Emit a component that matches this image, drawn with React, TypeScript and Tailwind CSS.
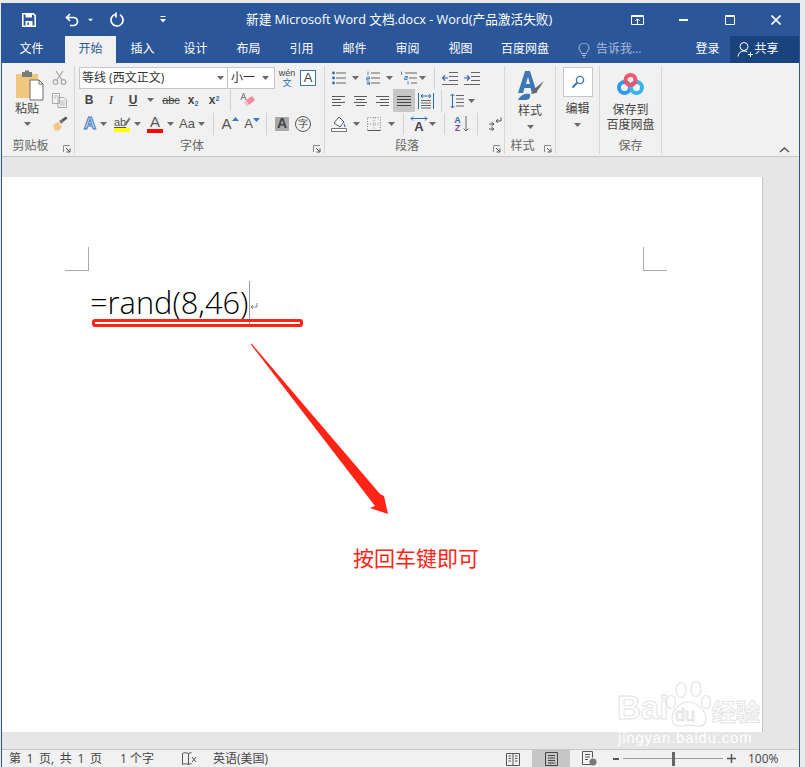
import React from "react";

const cjk = "font-['Open_Sans','Noto_Sans_CJK_SC',sans-serif]";

function Caret({ className = "", color = "#6a6a6a" }: { className?: string; color?: string }) {
  return (
    <svg width="7" height="4" viewBox="0 0 7 4" className={`shrink-0 ${className}`}>
      <path d="M0 0h7L3.5 4z" fill={color} />
    </svg>
  );
}

function Launcher() {
  return (
    <svg width="8" height="8" viewBox="0 0 8 8" className="shrink-0">
      <path d="M.5 7V.5H7" fill="none" stroke="#8a8a8a" />
      <path d="M3 3l3.5 3.5M7 3.5V7H3.5" fill="none" stroke="#555" />
    </svg>
  );
}

function Sep({ className = "" }: { className?: string }) {
  return <div className={`h-[22px] w-px shrink-0 bg-[#d2d2d2] ${className}`} />;
}

function Lines({ d, className = "", w = 15, h = 14, color = "#5a5a5a" }: { d: string; className?: string; w?: number; h?: number; color?: string }) {
  return (
    <svg width={w} height={h} viewBox={`0 0 ${w} ${h}`} className={`shrink-0 ${className}`}>
      <path d={d} fill="none" stroke={color} strokeWidth="1" />
    </svg>
  );
}

function Group({ label, width, children, launcher }: { label: string; width: string; children: React.ReactNode; launcher?: boolean }) {
  return (
    <div className={`flex h-[88px] shrink-0 flex-col border-r border-[#d6d6d6] ${width}`}>
      <div className="h-[72px] shrink-0">{children}</div>
      <div className={`relative flex h-[16px] items-center justify-center text-[12px] text-[#666] ${launcher ? "pr-[15px]" : ""}`}>
        <span>{label}</span>
        {launcher && (
          <span className="absolute right-[3px] top-[7px] flex">
            <Launcher />
          </span>
        )}
      </div>
    </div>
  );
}

function TitleBar() {
  return (
    <div className="relative flex h-[33px] items-center bg-[#2b579a] text-white">
      <svg width="14" height="14" viewBox="0 0 14 14" className="ml-[20px]">
        <path d="M.8.8h10.5L13.2 2.7V13.2H.8z" fill="none" stroke="#fff" strokeWidth="1.6" />
        <path d="M3.5 1h6.5v3.5H3.5z" fill="#fff" />
        <path d="M3.5 8h7v5h-7z" fill="#fff" />
        <path d="M5.5 9.5h1.5V12H5.5z" fill="#2b579a" />
      </svg>
      <svg width="14" height="14" viewBox="0 0 14 14" className="ml-[29px]">
        <path d="M5 1L1.5 4.5 5 8M2 4.5h6.5a4 4 0 0 1 0 8H5" fill="none" stroke="#fff" strokeWidth="1.7" />
      </svg>
      <Caret color="#fff" className="ml-[8px] scale-75" />
      <svg width="15" height="15" viewBox="0 0 15 15" className="ml-[16px]">
        <path d="M5.5 2.2A6 6 0 1 0 10 2.8M6 .5v5" fill="none" stroke="#fff" strokeWidth="1.7" />
      </svg>
      <svg width="6" height="7" viewBox="0 0 6 7" className="ml-[35px]">
        <path d="M.5 .5h5" stroke="#fff" />
        <path d="M0 3h6L3 6.5z" fill="#fff" />
      </svg>
      <span className="ml-[80px] whitespace-nowrap text-[12.66px]">新建 Microsoft Word 文档.docx - Word(产品激活失败)</span>
      <svg width="13" height="10" viewBox="0 0 13 10" className="ml-auto">
        <path d="M.5.5h12v9H.5z" fill="none" stroke="#fff" />
        <path d="M.5 1.5h12" stroke="#fff" />
        <path d="M6.5 9V4M4.3 6L6.5 3.8 8.7 6" fill="none" stroke="#fff" />
      </svg>
      <div className="ml-[35px] h-[2px] w-[9px] bg-white" />
      <svg width="10" height="10" viewBox="0 0 10 10" className="ml-[37px]">
        <path d="M.5.5h9v9h-9z" fill="none" stroke="#fff" />
        <path d="M0 1.5h10" stroke="#fff" />
      </svg>
      <svg width="10" height="10" viewBox="0 0 10 10" className="ml-[36px] mr-[18px]">
        <path d="M.5.5l9 9M9.5.5l-9 9" stroke="#fff" strokeWidth="1.6" />
      </svg>
    </div>
  );
}

function TabBar() {
  const tabs = ["插入", "设计", "布局", "引用", "邮件", "审阅", "视图"];
  return (
    <div className="flex h-[27px] items-stretch bg-[#2b579a] text-[12px] text-white">
      <div className="flex w-[63px] items-center justify-center pb-[1px] pr-[4px]">文件</div>
      <div className="flex w-[51px] items-center justify-center bg-[#f1f1f1] pb-[1px] text-[#2b579a]">开始</div>
      {tabs.map((t) => (
        <div key={t} className="flex w-[53px] shrink-0 items-center justify-center pb-[1px]">
          {t}
        </div>
      ))}
      <div className="ml-[14px] flex items-center pb-[1px]">百度网盘</div>
      <svg width="12" height="15" viewBox="0 0 12 15" className="ml-[29px] mt-[7px]">
        <path d="M3.5 10.5C3 8 1 7.5 1 5a5 5 0 0 1 10 0c0 2.5-2 3-2.5 5.5zM4 12.5h4M5 14.3h2" fill="none" stroke="#a9bcd8" />
      </svg>
      <div className="ml-[6px] flex items-center pb-[1px] text-[#a9bcd8]">告诉我...</div>
      <div className="ml-[54px] flex items-center pb-[1px]">登录</div>
      <div className="ml-[10px] flex w-[69px] items-center bg-[#19437c] pl-[7px]">
        <svg width="16" height="17" viewBox="0 0 16 17">
          <circle cx="7" cy="5.5" r="4" fill="none" stroke="#fff" />
          <path d="M1 15.5c.5-3.5 2.5-5.5 6-5.5 1.5 0 2.5.4 3.3 1M11 13.5h5M13.5 11v5" fill="none" stroke="#fff" />
        </svg>
        <span className="ml-[2px] pb-[2px]">共享</span>
      </div>
    </div>
  );
}

function Clipboard() {
  return (
    <Group label="剪贴板" width="w-[73px]" launcher>
      <div className="flex pl-[13px] pt-[4px]">
        <div className="flex w-[30px] flex-col items-start">
          <svg width="29" height="31" viewBox="0 0 29 31">
            <path d="M1 4h22v24H1z" fill="#f0c77e" />
            <path d="M7 2h10v5H7z" fill="#7a7a7a" />
            <path d="M10 .5h4V3h-4z" fill="#7a7a7a" />
            <path d="M15 10h9l4 4v16H15z" fill="#fff" stroke="#6a6a6a" />
            <path d="M24 10v4h4" fill="none" stroke="#6a6a6a" />
          </svg>
          <span className="text-[12px] leading-[16px] text-[#444]">粘贴</span>
          <Caret className="ml-[9px] mt-[5px]" />
        </div>
        <div className="ml-[7px] flex flex-col gap-[8px]">
          <svg width="15" height="15" viewBox="0 0 15 15">
            <path d="M4 1l6.5 9.5M11 1L4.5 10.5" stroke="#a9a9a9" strokeWidth="1.3" fill="none" />
            <circle cx="3.5" cy="12" r="2.3" fill="none" stroke="#a9a9a9" strokeWidth="1.3" />
            <circle cx="11.5" cy="12" r="2.3" fill="none" stroke="#a9a9a9" strokeWidth="1.3" />
          </svg>
          <svg width="15" height="15" viewBox="0 0 15 15">
            <path d="M.5.5h7v10h-7zM6 4.5h6l2.5 2.5v7.5H6z" fill="#f4f4f4" stroke="#a9a9a9" />
            <path d="M2 3h4M2 5h2M8 8h5M8 10h5M8 12h5" stroke="#bbb" />
          </svg>
          <svg width="16" height="15" viewBox="0 0 16 15">
            <path d="M1 9l5-3 4 5-3 3.5H3z" fill="#f0c77e" />
            <path d="M7 5l3-2 2 2-2.5 3z" fill="#777" />
            <path d="M10 3l4-2.5 1.5 2-4 3z" fill="#555" />
          </svg>
        </div>
      </div>
    </Group>
  );
}

function Font() {
  return (
    <Group label="字体" width="w-[250px]" launcher>
      <div className="flex flex-col pt-[1px]">
        <div className="flex h-[22px] items-center">
          <div className="ml-[4px] flex h-[22px] w-[149px] items-center border border-[#c6c6c6] bg-white pl-[2px] pr-[3px] text-[12px] text-[#333]">
            <span>等线 (西文正文)</span>
            <Caret className="ml-auto" />
          </div>
          <div className="flex h-[22px] w-[47px] items-center border border-l-0 border-[#c6c6c6] bg-white pl-[3px] pr-[5px] text-[12px] text-[#333]">
            <span>小一</span>
            <Caret className="ml-auto" />
          </div>
          <div className="ml-[4px] flex w-[16px] flex-col items-center text-[9px] leading-[10px]">
            <span className="font-['Liberation_Sans',sans-serif] text-[#444]">wén</span>
            <span className="text-[#2b6cb0]">文</span>
          </div>
          <div className="ml-[5px] flex h-[16px] w-[16px] items-center justify-center border border-[#3d78b5] bg-white font-['Liberation_Sans',sans-serif] text-[13px] text-[#444]">A</div>
        </div>
        <div className="flex h-[22px] items-center font-['Liberation_Sans',sans-serif] text-[#444]">
          <span className="ml-[3px] w-[22px] text-center text-[12px] font-bold">B</span>
          <span className="w-[22px] text-center font-['Liberation_Serif',serif] text-[13px] italic">I</span>
          <span className="w-[22px] text-center text-[12px] font-bold underline">U</span>
          <Caret className="ml-[3px]" />
          <span className="ml-[5px] w-[24px] text-center text-[11px] line-through">abc</span>
          <span className="w-[20px] text-center text-[12px] font-bold">x<sub className="text-[7px] text-[#2b6cb0]">2</sub></span>
          <span className="w-[22px] text-center text-[12px] font-bold">x<sup className="text-[7px] text-[#2b6cb0]">2</sup></span>
          <Sep className="ml-[5px]" />
          <svg width="16" height="17" viewBox="0 0 16 17" className="ml-[9px]">
            <path d="M6 8l6-4 3 4-6 5z" fill="#ee8c9a" />
            <path d="M6 8l3 5-2 1.5-3-4z" fill="#f3c2cb" />
            <path d="M1 8l2.5-7L6 8M2 5.5h3" fill="none" stroke="#777" />
          </svg>
        </div>
        <div className="mt-[1px] flex h-[23px] items-center font-['Liberation_Sans',sans-serif] text-[#555]">
          <span className="ml-[7px] w-[16px] text-center text-[17px] font-bold leading-none text-[#cfe2f5] [-webkit-text-stroke:1px_#3d78b5]">A</span>
          <Caret className="ml-[2px]" />
          <div className="relative ml-[7px] flex w-[16px] flex-col items-start">
            <span className="text-[11px] leading-[12px] underline">ab</span>
            <svg width="8" height="10" viewBox="0 0 8 10" className="absolute left-[9px] top-[1px]">
              <path d="M.5 9.5L2 6l4-5.5L7.5 2 3.5 8z" fill="#777" />
            </svg>
            <div className="h-[4px] w-[16px] bg-[#ffff00]" />
          </div>
          <Caret className="ml-[4px]" />
          <div className="ml-[6px] flex w-[16px] flex-col items-center">
            <span className="text-[15px] leading-[14px]">A</span>
            <div className="h-[4px] w-[16px] bg-[#ff0000]" />
          </div>
          <Caret className="ml-[4px]" />
          <span className="ml-[5px] w-[16px] text-center text-[13px]">Aa</span>
          <Caret className="ml-[3px]" />
          <Sep className="ml-[8px]" />
          <div className="ml-[8px] flex w-[16px] items-start justify-center">
            <span className="text-[15px] leading-none">A</span>
            <Caret color="#3d78b5" className="mt-[1px] rotate-180" />
          </div>
          <div className="ml-[6px] flex w-[16px] items-start justify-center">
            <span className="text-[13px] leading-none">A</span>
            <Caret color="#3d78b5" className="mt-[1px]" />
          </div>
          <Sep className="ml-[6px]" />
          <span className="ml-[8px] flex h-[14px] w-[14px] items-center justify-center bg-[#a9a9a9] text-[14px] font-bold text-[#444]">A</span>
          <span className="ml-[6px] flex h-[16px] w-[16px] items-center justify-center rounded-full border border-[#555] text-[10px] text-[#333]">字</span>
        </div>
      </div>
    </Group>
  );
}

const L_LEFT = "M0 2.5h13M0 5.5h9M0 8.5h13M0 11.5h9";
const L_CENTER = "M0 2.5h13M2 5.5h9M0 8.5h13M2 11.5h9";
const L_RIGHT = "M0 2.5h13M4 5.5h9M0 8.5h13M4 11.5h9";
const L_JUST = "M0 2.5h14M0 5.5h14M0 8.5h14M0 11.5h14";

function Paragraph() {
  return (
    <Group label="段落" width="w-[180px]" launcher>
      <div className="flex flex-col pt-[1px]">
        <div className="flex h-[22px] items-center">
          <svg width="14" height="14" viewBox="0 0 14 14" className="ml-[7px]">
            <path d="M4 2h10M4 7h10M4 12h10" stroke="#666" />
            <circle cx="1.5" cy="2" r="1.4" fill="#2b6cb0" />
            <circle cx="1.5" cy="7" r="1.4" fill="#2b6cb0" />
            <circle cx="1.5" cy="12" r="1.4" fill="#2b6cb0" />
          </svg>
          <Caret className="ml-[6px]" />
          <svg width="14" height="14" viewBox="0 0 14 14" className="ml-[7px]">
            <path d="M5 2h9M5 7h9M5 12h9" stroke="#666" />
            <path d="M2 .5v3.5M.5 6h3v1.5h-3V9h3M.5 11h3v3h-3M1 12.5h2" fill="none" stroke="#2b6cb0" strokeWidth=".8" />
          </svg>
          <Caret className="ml-[6px]" />
          <svg width="17" height="14" viewBox="0 0 17 14" className="ml-[7px]">
            <path d="M5 2h12M9 7h8M11 12h6" stroke="#666" />
            <path d="M1.5 .5v3.5M4.5 5.5h3v1.5h-3v1.5h3M8 10v3.5" fill="none" stroke="#2b6cb0" strokeWidth=".8" />
          </svg>
          <Caret className="ml-[2px]" />
          <Sep className="ml-[8px]" />
          <svg width="16" height="13" viewBox="0 0 16 13" className="ml-[7px]">
            <path d="M7 .5h9M7 4.5h9M7 8.5h9M0 12.5h16" stroke="#666" />
            <path d="M6 6H1M3 3.5L.5 6 3 8.5" fill="none" stroke="#2b6cb0" strokeWidth="1.2" />
          </svg>
          <svg width="16" height="13" viewBox="0 0 16 13" className="ml-[6px]">
            <path d="M7 .5h9M7 4.5h9M7 8.5h9M0 12.5h16" stroke="#666" />
            <path d="M0 6h5M3 3.5L5.5 6 3 8.5" fill="none" stroke="#2b6cb0" strokeWidth="1.2" />
          </svg>
        </div>
        <div className="flex h-[23px] items-center">
          <Lines d={L_LEFT} w={13} className="ml-[7px]" />
          <Lines d={L_CENTER} w={13} className="ml-[9px]" />
          <Lines d={L_RIGHT} w={13} className="ml-[9px]" />
          <div className="ml-[4px] flex h-[23px] w-[22px] items-center justify-center bg-[#c6c6c6]">
            <Lines d={L_JUST} w={14} color="#444" />
          </div>
          <svg width="16" height="16" viewBox="0 0 16 16" className="ml-[3px]">
            <path d="M.5 0v16M15.5 0v16" stroke="#2b6cb0" />
            <path d="M3 3h10M5 1l-2 2 2 2M11 1l2 2-2 2" fill="none" stroke="#2b6cb0" />
            <path d="M3 7.5h10M3 10h10M3 12.5h10M3 15h10" stroke="#666" />
          </svg>
          <Sep className="ml-[7px]" />
          <svg width="14" height="16" viewBox="0 0 14 16" className="ml-[8px]">
            <path d="M6 2.5h8M6 6h8M6 9.5h8M6 13h8" stroke="#666" />
            <path d="M2.5 1v14M.5 3l2-2 2 2M.5 13l2 2 2-2" fill="none" stroke="#2b6cb0" />
          </svg>
          <Caret className="ml-[4px]" />
        </div>
        <div className="flex h-[23px] items-center">
          <svg width="17" height="17" viewBox="0 0 17 17" className="ml-[6px]">
            <path d="M3 8l5-6 5 5-4 5z" fill="#fff" stroke="#555" />
            <path d="M13 8c1 2 2 3 1.5 4s-2 0-1.5-4z" fill="#3d78b5" />
            <path d="M.5 13.5h15v3H.5z" fill="#fff" stroke="#777" />
          </svg>
          <Caret className="ml-[5px]" />
          <svg width="14" height="14" viewBox="0 0 14 14" className="ml-[7px]">
            <path d="M.5.5h13v13H.5zM7 .5v13M.5 7h13" fill="none" stroke="#888" strokeDasharray="1 1.5" />
            <path d="M.5 13.5h13" stroke="#555" />
          </svg>
          <Caret className="ml-[7px]" />
          <Sep className="ml-[8px]" />
          <div className="ml-[7px] flex w-[16px] flex-col items-center">
            <svg width="18" height="5" viewBox="0 0 18 5">
              <path d="M1 2.5h16M3 .5l-2 2 2 2M15 .5l2 2-2 2" fill="none" stroke="#2b6cb0" />
            </svg>
            <span className="font-['Liberation_Sans',sans-serif] text-[13px] font-bold leading-[11px] text-[#444]">A</span>
          </div>
          <Caret className="ml-[2px]" />
          <Sep className="ml-[8px]" />
          <div className="ml-[8px] flex w-[9px] flex-col items-center font-['Liberation_Sans',sans-serif] text-[9px] font-bold leading-[8px]">
            <span className="text-[#2b6cb0]">A</span>
            <span className="text-[#7a4fa3]">Z</span>
          </div>
          <svg width="6" height="16" viewBox="0 0 6 16" className="ml-[1px]">
            <path d="M3 0v15M.5 12.5L3 15l2.5-2.5" fill="none" stroke="#666" />
          </svg>
          <Sep className="ml-[8px]" />
          <svg width="13" height="14" viewBox="0 0 13 14" className="ml-[11px]">
            <path d="M12 .5v3.5H7M9 2L7 4l2 2M0 7h4M2.5 5L5 7 2.5 9M0 12h4M2.5 10L5 12l-2.5 2" fill="none" stroke="#555" />
          </svg>
        </div>
      </div>
    </Group>
  );
}

function Styles() {
  return (
    <Group label="样式" width="w-[51px]" launcher>
      <div className="flex flex-col items-center pt-[5px]">
        <svg width="29" height="30" viewBox="0 0 29 30">
          <path d="M9 0h5l7 22h-5l-1.5-5h-6L7 22H2zM10 13h4l-2-7z" fill="#3d78b5" />
          <path d="M15 23l2-4 11-9-8 12z" fill="#666" />
          <path d="M2 29c2-4 6-7 12-6 1 3-1 6-4 6z" fill="#3d78b5" />
        </svg>
        <span className="mt-[1px] text-[12px] leading-[18px] text-[#444]">样式</span>
        <Caret className="mt-[5px]" />
      </div>
    </Group>
  );
}

function Editing() {
  return (
    <Group label="" width="w-[44px]">
      <div className="flex flex-col items-center pt-[1px]">
        <div className="flex h-[30px] w-[30px] items-center justify-center border border-[#c6c6c6] bg-white">
          <svg width="14" height="14" viewBox="0 0 14 14">
            <circle cx="9" cy="5" r="3.6" fill="none" stroke="#3d78b5" strokeWidth="1.4" />
            <path d="M6.2 7.8L1.5 12.5" stroke="#3d78b5" strokeWidth="2" />
          </svg>
        </div>
        <span className="mt-[3px] text-[12px] leading-[18px] text-[#444]">编辑</span>
        <Caret className="mt-[5px]" />
      </div>
    </Group>
  );
}

function Save() {
  return (
    <Group label="保存" width="w-[62px]">
      <div className="flex flex-col items-center pt-[7px]">
        <svg width="27" height="23" viewBox="0 0 27 23">
          <circle cx="7.5" cy="14.5" r="5.5" fill="none" stroke="#2f9be8" strokeWidth="4" />
          <circle cx="19.5" cy="14.5" r="5.5" fill="none" stroke="#36b6e8" strokeWidth="4" />
          <circle cx="13.5" cy="7" r="5" fill="none" stroke="#f0566f" strokeWidth="4" />
        </svg>
        <span className="mt-[6px] text-[12px] leading-[15px] text-[#444]">保存到</span>
        <span className="text-[12px] leading-[15px] text-[#444]">百度网盘</span>
      </div>
    </Group>
  );
}

function Ribbon() {
  return (
    <div className="relative flex h-[94px] items-start border-b border-[#c6c6c6] bg-[#f1f1f1] pt-[3px]">
      <Clipboard />
      <Font />
      <Paragraph />
      <Styles />
      <Editing />
      <Save />
      <svg width="11" height="6" viewBox="0 0 11 6" className="ml-auto mr-[9px] mt-[81px]">
        <path d="M1 5l4.5-4 4.5 4" fill="none" stroke="#555" strokeWidth="1.5" />
      </svg>
    </div>
  );
}

function Watermark() {
  return (
    <div className="absolute left-[615px] top-[500px] h-[50px] w-[145px]">
      <svg width="50" height="50" viewBox="0 0 50 50" className="absolute left-[48px] top-[2px]">
        <g fill="#fff" stroke="#e4e4e4" strokeWidth="1.2">
          <ellipse cx="16" cy="11" rx="5" ry="7.5" />
          <ellipse cx="31" cy="10" rx="5" ry="7.5" />
          <ellipse cx="6" cy="23" rx="4.5" ry="6.5" />
          <ellipse cx="41" cy="23" rx="4.5" ry="6.5" />
          <path d="M7 40c0-9 8-17 16-17s18 8 18 17c0 6-5 8-10 7-4-1-9-1-13 0-5 1-11-1-11-7z" />
        </g>
      </svg>
      <span className="absolute left-0 top-[13px] font-['Liberation_Sans',sans-serif] text-[33px] font-bold leading-[36px] text-white [-webkit-text-stroke:1px_#e4e4e4]">Bai</span>
      <span className="absolute left-[58px] top-[28px] font-['Liberation_Sans',sans-serif] text-[18px] leading-[20px] text-white [-webkit-text-stroke:1px_#e4e4e4]">du</span>
      <span className="absolute left-[95px] top-[20px] text-[24px] font-bold leading-[30px] text-white [-webkit-text-stroke:1px_#e4e4e4]">经验</span>
    </div>
  );
}

function DocPage() {
  return (
    <div className="relative mt-[20px] h-[555px] w-[761px] border-r border-[#c6c6c6] bg-white">
      <div className="absolute left-[63px] top-[70px] h-[24px] w-[24px] border-b border-r border-[#a9a9a9]" />
      <div className="absolute left-[641px] top-[70px] h-[24px] w-[24px] border-b border-l border-[#a9a9a9]" />
      <div className="flex items-center pl-[88px] pt-[105px]">
        <span className="whitespace-nowrap font-['Open_Sans',sans-serif] text-[30.8px] font-light leading-[40px] text-black">=rand(8,46)</span>
      </div>
      <div className="absolute left-[247px] top-[104px] h-[43px] w-px bg-[#999]" />
      <svg width="10" height="10" viewBox="0 0 10 10" className="absolute left-[248px] top-[125px]">
        <path d="M7 1v4H1M3 3L1 5l2 2" fill="none" stroke="#888" />
      </svg>
      <div className="absolute left-[90px] top-[142px] h-[8px] w-[211px] rounded-[3px] border-[3px] border-[#ff2415]" />
      <svg width="140" height="172" viewBox="0 0 140 172" className="absolute left-[248px] top-[166px]">
        <path d="M.5 1l1-.5L130 151l4 2 4 18-18-6 5-2z" fill="#ff2415" />
      </svg>
      <span className="absolute left-[351px] top-[366px] text-[21px] leading-[30px] text-[#ff2415]">按回车键即可</span>
      <Watermark />
    </div>
  );
}

function StatusBar() {
  return (
    <div className="flex h-[18px] items-center border-t border-[#c6c6c6] bg-[#f1f1f1] text-[12px] text-[#444]">
      <span className="ml-[7px] whitespace-nowrap [word-spacing:2.5px]">第 1 页, 共 1 页</span>
      <span className="ml-[18px] whitespace-nowrap">1 个字</span>
      <svg width="15" height="14" viewBox="0 0 15 14" className="ml-[28px]">
        <path d="M.5 1.5c2-1 4-1 6 0v11c-2-1-4-1-6 0zM6.5 1.5c1-.5 2-.8 3-.8M6.5 12.5c1-.5 2-.8 3-.8" fill="none" stroke="#555" />
        <path d="M10 5l4 5M14 5l-4 5" stroke="#555" />
      </svg>
      <span className="ml-[16px] whitespace-nowrap">英语(美国)</span>
      <svg width="14" height="14" viewBox="0 0 14 14" className="ml-[238px]">
        <path d="M.5 1.5h13v12H.5zM7 1.5v12M2.5 4h2.5M2.5 6.5h2.5M2.5 9h2.5M9 4h2.5M9 6.5h2.5M9 9h2.5" fill="none" stroke="#555" />
      </svg>
      <div className="ml-[12px] flex h-[17px] w-[38px] items-center justify-center bg-[#c6c6c6]">
        <svg width="13" height="14" viewBox="0 0 13 14">
          <path d="M.5.5h12v13H.5zM3 3.5h7M3 6h7M3 8.5h7M3 11h7" fill="none" stroke="#444" />
        </svg>
      </div>
      <svg width="15" height="15" viewBox="0 0 15 15" className="ml-[12px]">
        <path d="M9 13.5H.5V.5h10v6M3 3.5h5M3 6h5M3 8.5h3" fill="none" stroke="#555" />
        <circle cx="11" cy="11" r="3.5" fill="#777" />
      </svg>
      <div className="ml-[16px] h-[2px] w-[6px] bg-[#555]" />
      <div className="relative ml-[4px] flex h-[10px] w-[100px] items-center">
        <div className="h-px w-full bg-[#999]" />
        <div className="absolute left-[49px] top-[-2px] h-[14px] w-[3px] bg-[#666]" />
      </div>
      <svg width="9" height="9" viewBox="0 0 9 9" className="ml-[4px]">
        <path d="M4.5 0v9M0 4.5h9" stroke="#555" strokeWidth="1.5" />
      </svg>
      <span className="ml-[12px] whitespace-nowrap">100%</span>
    </div>
  );
}

export default function App() {
  return (
    <div className={`h-[767px] w-[805px] overflow-hidden bg-[#e9e9e9] pl-[1px] pr-[5px] pt-[3px] ${cjk}`}>
      <div className="relative flex h-[764px] flex-col border-x border-[#2b579a]">
        <TitleBar />
        <TabBar />
        <Ribbon />
        <div className="relative flex-1 overflow-hidden bg-[#e6e6e6]">
          <DocPage />
          <span className="absolute left-[616px] top-[570px] font-['Liberation_Sans',sans-serif] text-[15px] leading-[22px] tracking-[0.8px] text-white">jingyan.baidu.com</span>
        </div>
        <StatusBar />
      </div>
    </div>
  );
}
